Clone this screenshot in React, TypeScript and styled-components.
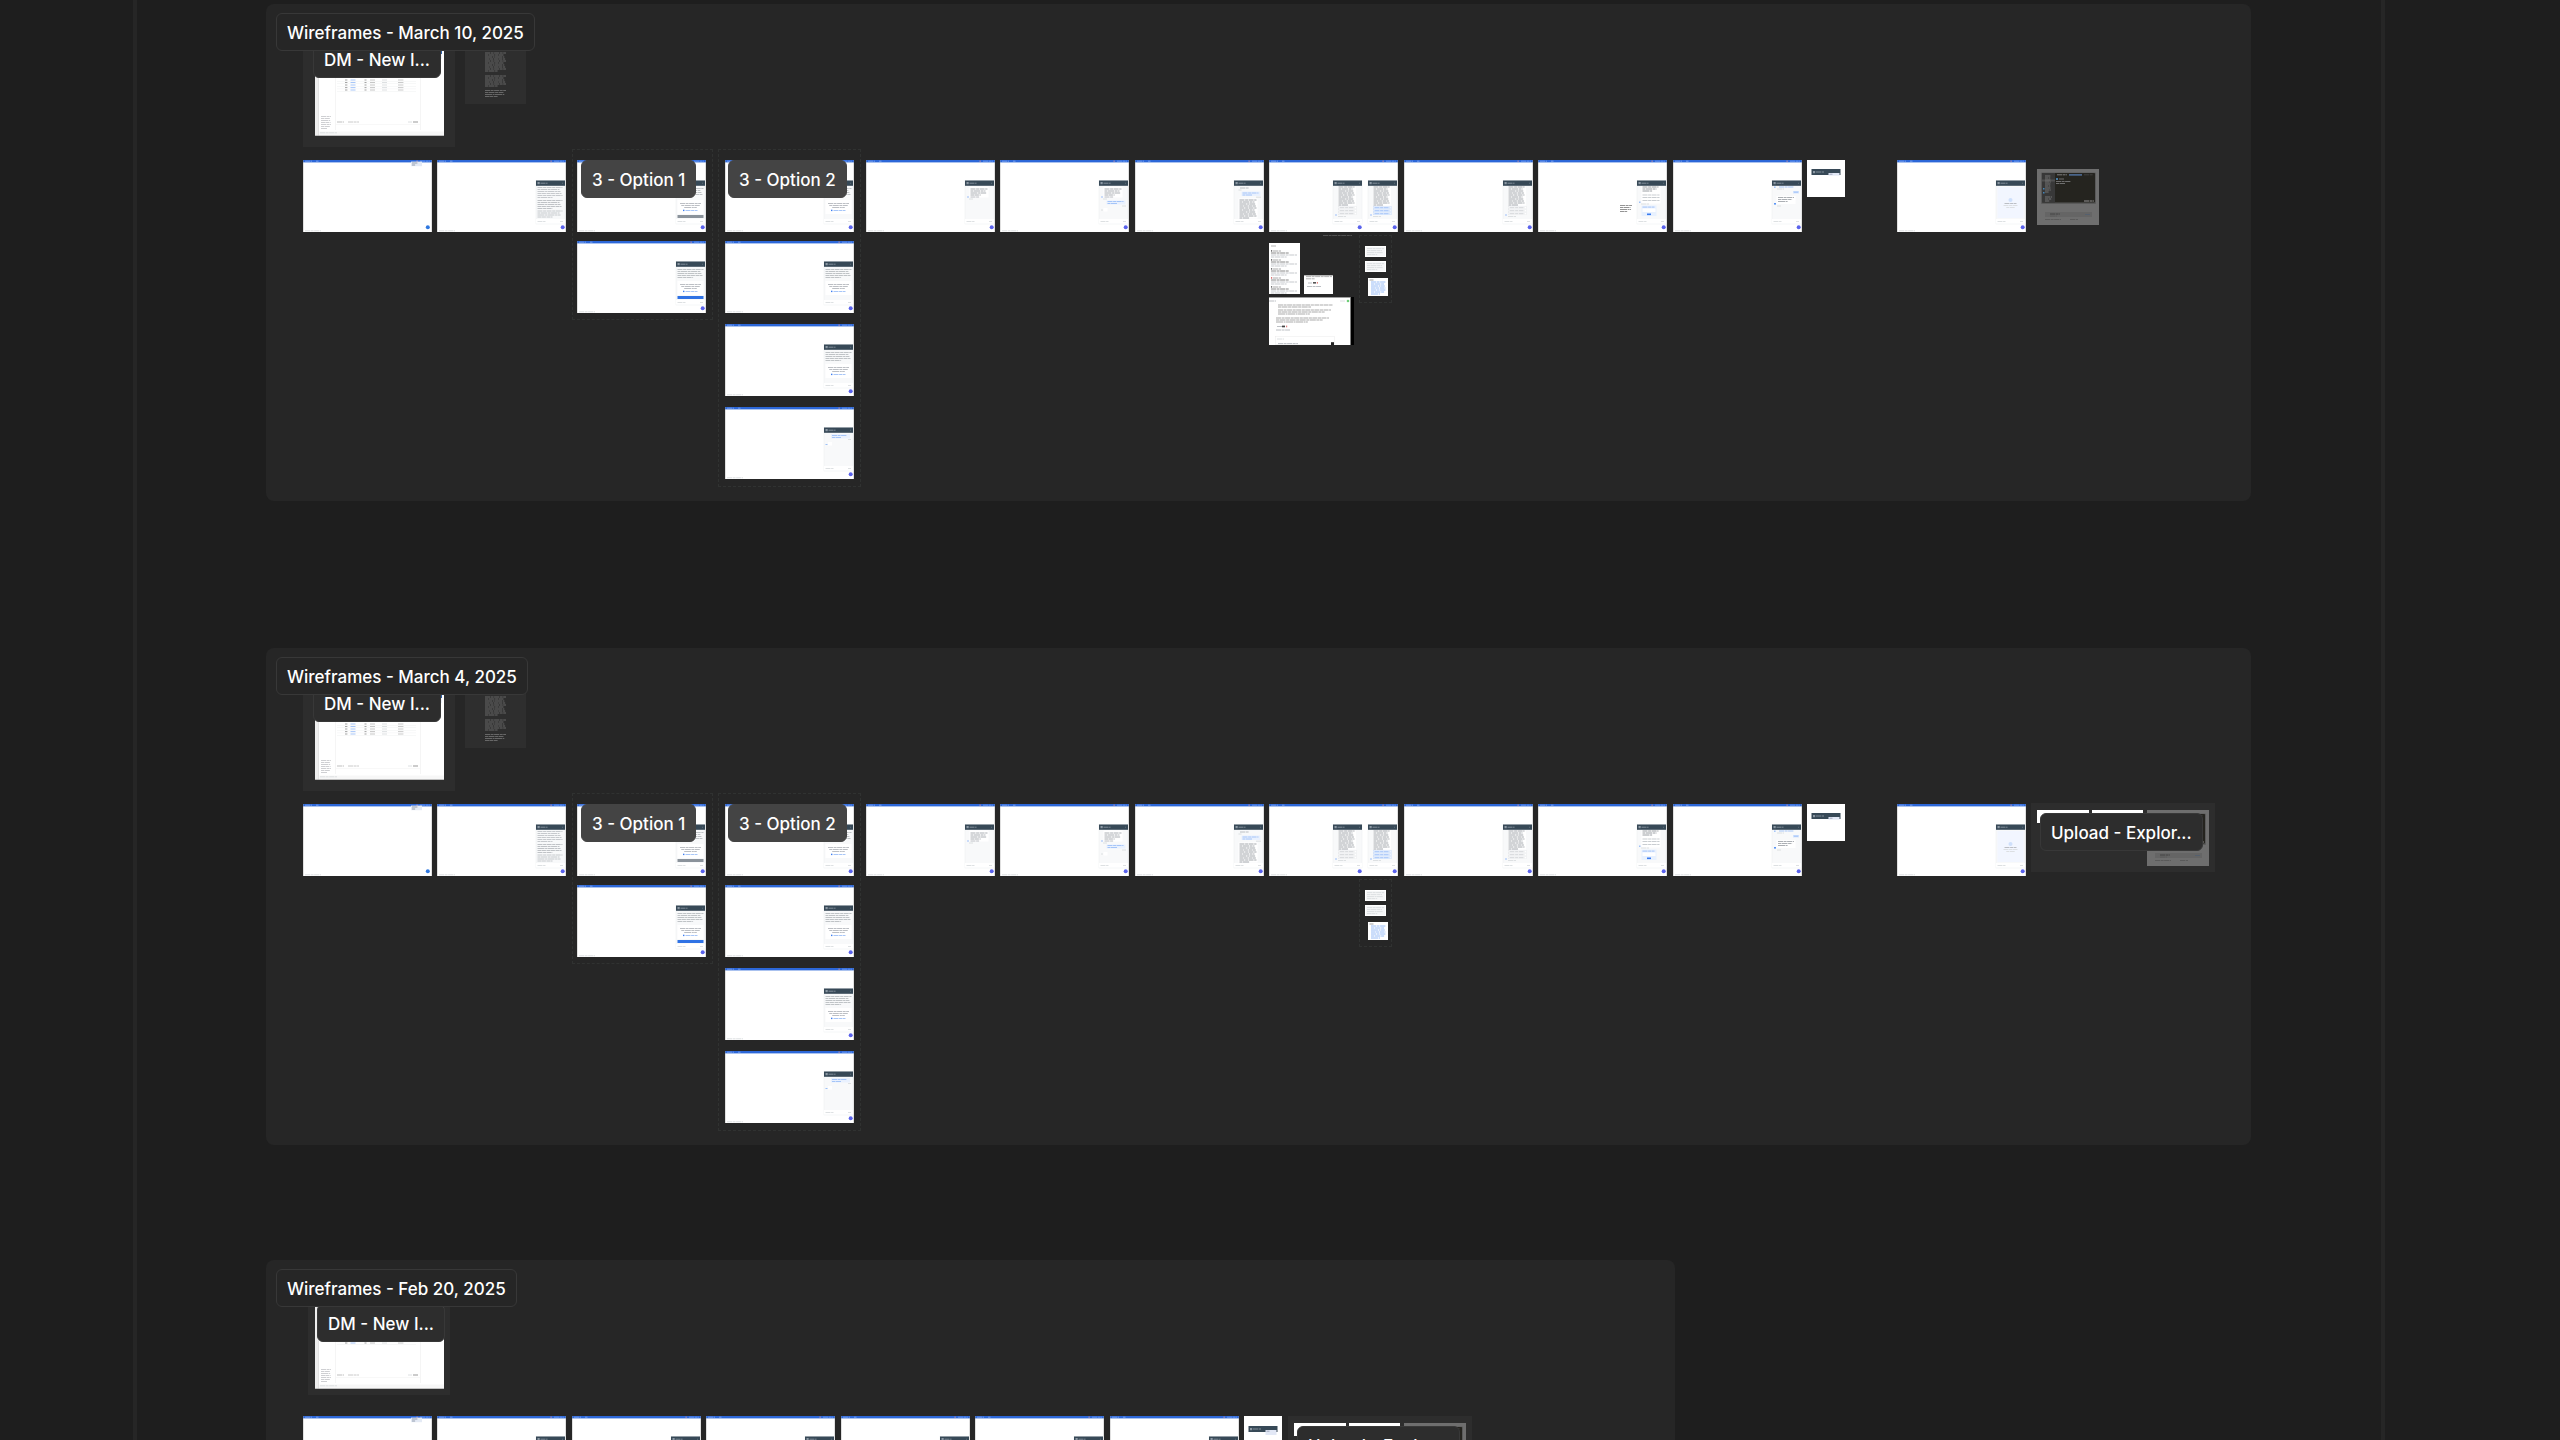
import React from "react";
import styled, { createGlobalStyle, css } from "styled-components";

const GlobalStyle = createGlobalStyle`
  *, *::before, *::after { box-sizing: border-box; }
  body {
    margin: 0;
    background: #1e1e1e;
    color: #ffffff;
    font-family: Inter, "Liberation Sans", sans-serif;
  }
`;

const Viewport = styled.main`
  height: 100vh;
  overflow: hidden;
  padding: 0 175px 0 133px;
`;

const Board = styled.div`
  display: flex;
  flex-direction: column;
  min-height: 100%;
  padding: 4px 130px 0 129px;
  border: solid #262626;
  border-width: 0 4px;
`;

const Section = styled.section<{ $width?: string; $gap?: number }>`
  position: relative;
  flex: none;
  width: ${(p) => p.$width ?? "100%"};
  height: 497px;
  margin-bottom: ${(p) => p.$gap ?? 0}px;
  border-radius: 8px;
  background: #262626;
`;

/* Anything the designer dropped on the canvas, in section coordinates. */
const onCanvas = css<{ $x: number; $y: number }>`
  position: absolute;
  left: ${(p) => p.$x}px;
  top: ${(p) => p.$y}px;
`;

const labelText = css`
  margin: 0;
  height: 38px;
  padding: 0 10px;
  border: 1px solid #383838;
  border-radius: 6px;
  font-size: 17px;
  font-weight: 500;
  line-height: 38px;
  white-space: nowrap;
`;

const SectionTitle = styled.h2<{ $x: number; $y: number }>`
  ${onCanvas}
  ${labelText}
  background: #262626;
`;

const NestedTitle = styled.h3<{ $x: number; $y: number }>`
  ${onCanvas}
  ${labelText}
  background: #2d2d2d;
`;

const GroupTitle = styled.h3<{ $x: number; $y: number }>`
  ${onCanvas}
  ${labelText}
  border-color: #444444;
  background: #444444;
`;

type BoxProps = { $x: number; $y: number; $w: number; $h: number };

const box = css<BoxProps>`
  ${onCanvas}
  width: ${(p) => p.$w}px;
  height: ${(p) => p.$h}px;
`;

const NestedSection = styled.div<BoxProps>`
  ${box}
  background: #2d2d2d;
`;

const DashedGroup = styled.div<BoxProps>`
  ${box}
  border: 1px dashed #303231;
`;

const Frame = styled.div<BoxProps & { $fill?: string }>`
  ${box}
  overflow: hidden;
  background: ${(p) => p.$fill ?? "#ffffff"};
`;

const Art = styled.svg`
  display: block;
  width: 100%;
  height: 100%;
`;

const GREY = "#b4b8bd";
const PALE = "#d9dcdf";
const BLUE = "#9dc0f7";

const dashes = ["5 .6 3 .5", "3 .5 6 .6", "7 .6 2 .4", "4 .4 4 .6"];

function Lines({
  x, y, w, n, step = 2, color = GREY, center = false,
}: { x: number; y: number; w: number; n: number; step?: number; color?: string; center?: boolean }) {
  return (
    <g stroke={color} strokeWidth="0.9">
      {Array.from({ length: n }, (_, i) => {
        const length = i === n - 1 && n > 1 ? w * 0.6 : w * (1 - ((i * 7) % 4) * 0.04);
        const start = center ? x + (w - length) / 2 : x;
        return (
          <line key={i} x1={start} x2={start + length} y1={y + i * step} y2={y + i * step}
            strokeDasharray={dashes[i % dashes.length]} />
        );
      })}
    </g>
  );
}

type Kind =
  | "long" | "agreeOff" | "agreeOn" | "agree" | "typing" | "welcome"
  | "reply" | "answer" | "choices" | "choicesOn" | "form" | "done" | "drop";

function Choices({ active = false }: { active?: boolean }) {
  const color = active ? BLUE : "#ced1d5";
  return (
    <g>
      <rect x="5" y="6" width="18" height="19" fill="#fff" />
      <Lines x={5.5} y={6.5} w={16} n={10} color="#9a9ea4" />
      {[26, 29, 32].map((y) => (
        <g key={y}>
          <rect x="5.5" y={y} width="18" height="2.4" fill={active ? "#eef4fe" : "#fff"} stroke={color} strokeWidth="0.2" />
          <Lines x={6.5} y={y + 1.2} w={15} n={1} color={color} />
        </g>
      ))}
      <rect x="2" y="34" width="2" height="1" fill={BLUE} />
      <Lines x={5} y={36} w={8} n={1} color={PALE} />
    </g>
  );
}

function Messages({ kind }: { kind: Kind }) {
  switch (kind) {
    case "long":
      return <g><Lines x={1.5} y={7} w={25} n={6} color="#c0c3c7" /><Lines x={1.5} y={20} w={25} n={5} color="#b8bbc0" /><Lines x={1.5} y={30.5} w={25} n={4} color="#c0c3c7" /></g>;
    case "agreeOff":
    case "agreeOn":
    case "agree":
      return (
        <g>
          <Lines x={1.5} y={8} w={26} n={5} color="#b8bcc0" />
          <rect x="1.5" y="19.5" width="26" height="14" fill="#fff" />
          <Lines x={4} y={23} w={21} n={3} center />
          <rect x="7" y="29.2" width="1.4" height="1.4" fill="#3b7cf0" />
          <Lines x={9.5} y={30} w={12} n={1} color={BLUE} />
          {kind !== "agree" && (
            <rect x="1.5" y="34.5" width="26" height="3" fill={kind === "agreeOn" ? "#2f72e4" : "#8b939b"} />
          )}
        </g>
      );
    case "typing":
      return <g><rect x="7" y="6.5" width="19" height="4.5" fill="#e9f1fe" /><Lines x={8} y={8} w={15} n={2} color={BLUE} /><Lines x={24} y={12} w={3} n={1} color={PALE} /><rect x="4" y="14.5" width="4" height="3.5" fill="#fff" /><rect x="1.5" y="16.5" width="2" height="1" fill={BLUE} /></g>;
    case "welcome":
    case "reply":
      return (
        <g>
          <rect x="4.5" y="6" width="19" height="11" fill="#fff" />
          <Lines x={5.5} y={8.5} w={17} n={4} color="#a2a6ab" />
          <rect x="2" y="16" width="2" height="1" fill={BLUE} />
          <Lines x={5.5} y={16.5} w={9} n={1} />
          <Lines x={4} y={18.5} w={4} n={1} color={PALE} />
          {kind === "reply" && (
            <g><rect x="7.5" y="20" width="19" height="4" fill="#e9f1fe" /><Lines x={8.5} y={21} w={16} n={2} color={BLUE} /><Lines x={23} y={25.5} w={4} n={1} color={PALE} /><rect x="4.5" y="27.5" width="4" height="3.5" fill="#fff" /><Lines x={2} y={29.5} w={2} n={1} color={PALE} /></g>
          )}
        </g>
      );
    case "answer":
      return <g><Lines x={6} y={7.5} w={9} n={1} /><Lines x={4.5} y={9.5} w={3} n={1} color={PALE} /><rect x="7.5" y="11" width="19" height="4.5" fill="#e9f1fe" /><Lines x={8.5} y={12.5} w={16} n={2} color={BLUE} /><Lines x={22} y={16.7} w={5} n={1} color={PALE} /><rect x="4.5" y="18" width="19" height="20" fill="#fff" /><Lines x={5.5} y={19.5} w={17} n={10} color="#999da3" /></g>;
    case "choices":
      return <Choices />;
    case "choicesOn":
      return <Choices active />;
    case "form":
      return (
        <g>
          <rect x="4.5" y="5" width="19" height="18" fill="#fff" />
          <Lines x={5.5} y={6.5} w={16} n={3} color="#8f9399" />
          <Lines x={5.5} y={14.5} w={17} n={1} color="#c3c7cc" />
          <Lines x={5.5} y={17} w={17} n={1} color="#c3c7cc" />
          <Lines x={5.5} y={20} w={17} n={1} color="#c3c7cc" />
          <rect x="2" y="21" width="1.5" height="1.5" fill={BLUE} />
          <Lines x={4} y={23.5} w={8} n={1} color={PALE} />
          <rect x="4.5" y="25" width="15" height="10.5" fill="#e8f1fe" />
          <rect x="5.5" y="28" width="13" height="3.5" fill="#fff" />
          <Lines x={5.5} y={26.6} w={12} n={1} color={BLUE} />
          <rect x="10" y="33" width="4" height="1.6" fill="#3b7cf0" />
        </g>
      );
    case "done":
      return <g><rect x="2" y="6" width="1.6" height="1.4" fill={BLUE} /><Lines x={7} y={6.5} w={15} n={1} color={BLUE} /><Lines x={5} y={8.5} w={7} n={1} color={PALE} /><rect x="21" y="10.5" width="6" height="2.4" fill="#cfe1fd" /><Lines x={22} y={11.7} w={4} n={1} color={BLUE} /><rect x="4.5" y="15.5" width="19" height="8" fill="#fff" /><Lines x={6} y={17} w={16} n={3} color="#a2a6ab" /><rect x="2" y="22.5" width="2" height="1.6" fill="#5b96f5" /><Lines x={5} y={25.5} w={4} n={1} color={PALE} /></g>;
    case "drop":
      return <g><rect x="1.5" y="6.5" width="26" height="31" fill="#f2f6ff" /><circle cx="14.5" cy="19.5" r="2" fill="#cfe0fb" /><Lines x={8.5} y={23} w={12} n={1} /><Lines x={7.5} y={25} w={14} n={2} color={PALE} center /></g>;
  }
}

function Panel({ x, kind }: { x: number; kind: Kind }) {
  return (
    <g transform={`translate(${x} 20.5)`}>
      <rect x="0" y="0" width="29" height="43.5" fill="#f8f9fa" stroke="#eceef0" strokeWidth="0.5" />
      <rect x="0" y="38.5" width="29" height="4.5" fill="#fff" />
      <Messages kind={kind} />
      <Lines x={1.5} y={41} w={8} n={1} color={PALE} />
      <Lines x={24} y={41} w={3} n={1} color={PALE} />
      <rect x="0" y="0" width="29" height="5.3" fill="#374957" />
      <rect x="1.5" y="1.5" width="2.2" height="2.2" fill="#8b98a3" />
      <Lines x={4.5} y={2.7} w={7} n={1} color="#8a96a1" />
      <rect x="26" y="2.3" width="1" height="0.8" fill="#667684" />
      <circle cx="26.7" cy="46.7" r="2" fill="#5a62ec" />
    </g>
  );
}

function Screen({ x, y, panels, note }: { x: number; y: number; panels: [number, Kind][]; note?: boolean }) {
  return (
    <Frame $x={x} $y={y} $w={129} $h={72}>
      <Art viewBox="0 0 129 72" aria-hidden="true">
        <rect width="129" height="2.4" fill="#2c67d8" />
        <Lines x={2} y={1.2} w={7} n={1} color="#7ea4ee" />
        <Lines x={13} y={1.2} w={2.5} n={1} color="#7ea4ee" />
        <rect x="113.5" y="0.6" width="1.2" height="1.2" fill="#c78fa0" />
        <Lines x={117} y={1.2} w={10} n={1} color="#6f9bf0" />
        <rect x="0" y="0" width="0.6" height="72" fill="#9a9a9a" opacity="0.5" />
        <rect x="128.4" y="0" width="0.6" height="72" fill="#9a9a9a" opacity="0.5" />
        <Lines x={2} y={70.8} w={16} n={1} color={PALE} />
        {panels.length === 0 && (
          <g>
            <rect x="108" y="1.6" width="11" height="4.6" fill="#e4eaf5" />
            <Lines x={109} y={3} w={6} n={2} color="#8f98a8" />
            <circle cx="124.8" cy="67.2" r="2" fill="#2f78e0" />
          </g>
        )}
        {panels.map(([px, kind]) => <Panel key={px} x={px} kind={kind} />)}
        {note && <Lines x={82} y={45.5} w={12} n={4} color="#888888" />}
      </Art>
    </Frame>
  );
}

function HeaderSnippet({ x, low }: { x: number; low?: boolean }) {
  const top = low ? 10 : 9;
  return (
    <Frame $x={x} $y={156} $w={38} $h={37}>
      <Art viewBox="0 0 38 37" aria-hidden="true">
        <rect x="4.5" y={top} width="29" height="6" fill="#374957" />
        <rect x="6" y={top + 2} width="2.2" height="2.2" fill="#8b98a3" />
        <Lines x={9} y={top + 3} w={8} n={1} color="#8a96a1" />
        <rect x="21.5" y={top + 4} width="11" height={low ? 5 : 2.6} fill="#e2e8f6" />
        <Lines x={22.5} y={top + 5.2} w={3} n={1} color="#9aa3b5" />
      </Art>
    </Frame>
  );
}

function Dashboard({ x, y, h }: { x: number; y: number; h: number }) {
  const base = h - 88;
  return (
    <Frame $x={x} $y={y} $w={129} $h={h}>
      <Art viewBox={`0 0 129 ${h}`} aria-hidden="true">
        <rect x="0" width="3" height={h} fill="#eeeeee" />
        <rect x="3" width="0.6" height={h} fill="#cfcfcf" />
        <g transform={`translate(0 ${base})`}>
          <rect x="122" y="0" width="5" height="6" fill="#2d5fa8" />
          <rect x="122" y="6" width="5" height="5" fill="#eef2fb" />
          {[32, 34.5, 37, 39.6, 42].map((ly) => (
            <g key={ly}>
              <rect x="22" y={ly + 1.2} width="79" height="0.3" fill="#e4e6e8" />
              <Lines x={30} y={ly} w={2.4} n={1} color="#999999" />
              <Lines x={35.5} y={ly} w={5} n={1} color={BLUE} />
              <Lines x={49.5} y={ly} w={2} n={1} color="#999999" />
              <Lines x={55} y={ly} w={5} n={1} color="#c0c0c0" />
              <Lines x={67} y={ly} w={5.5} n={1} color={PALE} />
              <Lines x={83} y={ly} w={6} n={1} color="#c4c4c4" />
            </g>
          ))}
          <rect x="20.5" y="20" width="0.4" height="62" fill="#e6e6e6" />
          <rect x="105" y="20" width="0.4" height="62" fill="#e6e6e6" />
          <rect x="21" y="76.5" width="84" height="0.3" fill="#e6e6e6" />
          <Lines x={6} y={68.5} w={10} n={7} color="#c8cacd" />
          <Lines x={22} y={74} w={7} n={1} color="#b8b8b8" />
          <Lines x={33} y={74} w={11} n={1} color="#c4c4c4" />
          <Lines x={93} y={74} w={4} n={1} color={PALE} />
          <rect x="98" y="73" width="5" height="2" fill="#cccccc" />
          <rect x="4" y="83.5" width="125" height="4" fill="#f7f7f7" />
          <Lines x={5} y={84.8} w={17} n={1} color={PALE} />
        </g>
        <rect x="0" y={h - 0.6} width="129" height="0.6" fill="#9a9a9a" />
      </Art>
    </Frame>
  );
}

function NotesDoc() {
  return (
    <Frame $x={199} $y={27} $w={61} $h={73} $fill="#2e2e2e">
      <Art viewBox="0 0 61 73" aria-hidden="true">
        <Lines x={20} y={22} w={21} n={10} color="#6e6e6e" />
        <Lines x={20} y={45} w={21} n={6} color="#6e6e6e" />
        <Lines x={20} y={59.5} w={21} n={4} color="#6e6e6e" />
      </Art>
    </Frame>
  );
}

function FileDialog({ x, y }: { x: number; y: number }) {
  return (
    <Frame $x={x} $y={y} $w={62} $h={56} $fill="#6e6e6e">
      <Art viewBox="0 0 62 56" aria-hidden="true">
        <rect x="4" y="3.5" width="55" height="31.5" rx="1" fill="#5a5a5a" />
        <rect x="5" y="4" width="53" height="29.5" rx="0.8" fill="#25241f" />
        <rect x="5" y="4" width="13" height="29.5" fill="#383838" />
        <rect x="5" y="10.5" width="13" height="2" fill="#505050" />
        <Lines x={8} y={7} w={6} n={9} color="#7a7a7a" />
        <Lines x={8} y={28} w={7} n={3} color="#7a7a7a" />
        <rect x="6" y="19" width="1.5" height="1.5" fill="#4384b8" />
        <rect x="6" y="23" width="1.5" height="1.5" fill="#4384b8" />
        <Lines x={20} y={5.8} w={10} n={1} color="#888888" />
        <rect x="32" y="5.2" width="13" height="1.4" fill="#5374a3" />
        <Lines x={47} y={5.8} w={9} n={1} color="#444444" />
        <rect x="19" y="9" width="2" height="2" fill="#477aa0" />
        <Lines x={22} y={10} w={5} n={1} color="#777777" />
        <Lines x={19} y={12.5} w={15} n={2} color="#777777" />
        <Lines x={47} y={32} w={10} n={1} color="#a0a0a0" />
        <rect x="8" y="43" width="47" height="5" fill="#656565" />
        <Lines x={13} y={45} w={10} n={1} color="#404040" />
        <Lines x={13} y={47} w={7} n={1} color="#5a5a5a" />
        <Lines x={48} y={45.5} w={5} n={1} color="#53606f" />
        <Lines x={8} y={50.5} w={16} n={1} color="#585858" />
        <Lines x={33} y={50.5} w={8} n={1} color="#585858" />
      </Art>
    </Frame>
  );
}

function ChoiceCards() {
  return (
    <>
      <DashedGroup $x={1093} $y={231} $w={33} $h={68} />
      {[242, 257].map((y) => (
        <Frame key={y} $x={1099} $y={y} $w={21} $h={11}>
          <Art viewBox="0 0 21 11" aria-hidden="true">
            <rect x="1" y="1" width="19" height="9" fill="#f6f7f8" />
            <Lines x={2} y={2.6} w={17} n={4} color={PALE} />
          </Art>
        </Frame>
      ))}
      <Frame $x={1102} $y={274} $w={20} $h={18}>
        <Art viewBox="0 0 20 18" aria-hidden="true">
          <Lines x={1.5} y={2} w={4} n={1} color="#999999" />
          <Lines x={3} y={4} w={15} n={7} color="#8db4f5" />
        </Art>
      </Frame>
    </>
  );
}

function References() {
  return (
    <>
      <Frame $x={1057} $y={230} $w={29} $h={3} $fill="transparent">
        <Art viewBox="0 0 29 3" aria-hidden="true"><Lines x={0} y={1.5} w={29} n={1} color="#555555" /></Art>
      </Frame>
      <Frame $x={1003} $y={239} $w={31} $h={51}>
        <Art viewBox="0 0 31 51" aria-hidden="true">
          <Lines x={2} y={3} w={5} n={1} color="#aaaaaa" />
          {[8, 17, 26, 35, 44].map((y, i) => (
            <g key={y}>
              <rect x="2" y={y - 0.8} width="1.2" height="1.4" fill={i === 3 ? "#d05050" : "#555555"} />
              <Lines x={4} y={y} w={8} n={1} color="#a0a0a0" />
              <Lines x={2} y={y + 2} w={18} n={1} color="#7c7c7c" />
              <Lines x={2} y={y + 4} w={26} n={2} color="#c0c3c7" />
            </g>
          ))}
        </Art>
      </Frame>
      <Frame $x={1038} $y={271} $w={29} $h={19}>
        <Art viewBox="0 0 29 19" aria-hidden="true">
          <rect width="29" height="0.6" fill="#888888" />
          <Lines x={2} y={1.6} w={26} n={1} color="#aaaaaa" />
          <Lines x={2} y={3.8} w={9} n={1} color="#aaaaaa" />
          <Lines x={4} y={8} w={4} n={1} />
          <rect x="9" y="7" width="3" height="1.6" fill="#555555" />
          <rect x="12.8" y="7" width="1.2" height="1.6" fill="#e08080" />
          <Lines x={3} y={11.5} w={14} n={1} />
        </Art>
      </Frame>
      <Frame $x={1003} $y={293} $w={85} $h={48} $fill="#000000">
        <Art viewBox="0 0 85 48" aria-hidden="true">
          <rect width="81.5" height="48" fill="#fff" />
          <rect width="81.5" height="0.7" fill="#777" />
          <Lines x={0} y={4} w={7} n={1} />
          <Lines x={71} y={4} w={5} n={1} color={PALE} />
          <circle cx="79" cy="4" r="1.3" fill="#6fce78" />
          <Lines x={9} y={8} w={55} n={2} color="#a2a2a2" />
          <Lines x={9} y={13} w={53} n={3} color="#a2a2a2" />
          <Lines x={7} y={21} w={53} n={3} color="#a2a2a2" />
          <Lines x={8} y={29.5} w={5} n={1} />
          <rect x="13" y="28.6" width="3" height="1.7" fill="#444" />
          <rect x="17" y="28.6" width="1.2" height="1.7" fill="#e08080" />
          <Lines x={7} y={33} w={14} n={1} />
          <rect x="6.5" y="39.5" width="59" height="8.2" fill="#fff" stroke="#e5e5e5" strokeWidth="0.4" />
          <Lines x={8} y={42} w={7} n={1} color={PALE} />
          <Lines x={9} y={46.6} w={20} n={1} />
          <rect x="62" y="45.2" width="3" height="2.8" fill="#222" />
        </Art>
      </Frame>
    </>
  );
}

function UploadSection({ x, y }: { x: number; y: number }) {
  return (
    <>
      <NestedSection $x={x} $y={y} $w={184} $h={69} />
      <Frame $x={x + 6} $y={y + 7} $w={52} $h={13} />
      <Frame $x={x + 61} $y={y + 7} $w={51} $h={13} />
      <FileDialog x={x + 116} y={y + 7} />
      <NestedTitle $x={x + 9} $y={y + 10}>Upload - Explor...</NestedTitle>
    </>
  );
}

const flow: { x: number; panels: [number, Kind][] }[] = [
  { x: 37, panels: [] },
  { x: 171, panels: [[99, "long"]] },
  { x: 600, panels: [[99, "welcome"]] },
  { x: 734, panels: [[99, "reply"]] },
  { x: 869, panels: [[99, "answer"]] },
  { x: 1003, panels: [[64, "choices"], [99, "choicesOn"]] },
  { x: 1138, panels: [[99, "choices"]] },
  { x: 1272, panels: [[99, "form"]] },
  { x: 1407, panels: [[99, "done"]] },
  { x: 1631, panels: [[99, "drop"]] },
];

function MarchFlow({ title, annotated, children }: { title: string; annotated?: boolean; children: React.ReactNode }) {
  return (
    <Section $gap={annotated ? 147 : 115}>
      <NestedSection $x={37} $y={27} $w={152} $h={116} />
      <Dashboard x={49} y={44} h={88} />
      <NotesDoc />
      <DashedGroup $x={306} $y={145} $w={141} $h={171} />
      <DashedGroup $x={452} $y={145} $w={143} $h={338} />
      {flow.map((screen) => (
        <Screen key={screen.x} x={screen.x} y={156} panels={screen.panels} note={annotated && screen.x === 1272} />
      ))}
      <Screen x={311} y={156} panels={[[99, "agreeOff"]]} />
      <Screen x={311} y={237} panels={[[99, "agreeOn"]]} />
      <Screen x={459} y={156} panels={[[99, "agree"]]} />
      <Screen x={459} y={237} panels={[[99, "agree"]]} />
      <Screen x={459} y={320} panels={[[99, "agree"]]} />
      <Screen x={459} y={403} panels={[[99, "typing"]]} />
      <HeaderSnippet x={1541} />
      <ChoiceCards />
      {children}
      <GroupTitle $x={315} $y={156}>3 - Option 1</GroupTitle>
      <GroupTitle $x={462} $y={156}>3 - Option 2</GroupTitle>
      <NestedTitle $x={47} $y={36}>DM - New I...</NestedTitle>
      <SectionTitle $x={10} $y={9}>{title}</SectionTitle>
    </Section>
  );
}

const februaryFlow: { x: number; panels: [number, Kind][] }[] = [
  { x: 37, panels: [] },
  { x: 171, panels: [[99, "long"]] },
  { x: 306, panels: [[99, "agree"]] },
  { x: 440, panels: [[99, "welcome"]] },
  { x: 575, panels: [[99, "reply"]] },
  { x: 709, panels: [[99, "answer"]] },
  { x: 844, panels: [[99, "choices"]] },
];

export default function App() {
  return (
    <Viewport>
      <GlobalStyle />
      <Board>
        <MarchFlow title="Wireframes - March 10, 2025" annotated>
          <References />
          <FileDialog x={1771} y={165} />
        </MarchFlow>
        <MarchFlow title="Wireframes - March 4, 2025">
          <UploadSection x={1765} y={155} />
        </MarchFlow>
        <Section $width="71%">
          <NestedSection $x={42} $y={27} $w={142} $h={108} />
          <Dashboard x={49} y={40} h={89} />
          {februaryFlow.map((screen) => (
            <Screen key={screen.x} x={screen.x} y={156} panels={screen.panels} />
          ))}
          <HeaderSnippet x={978} low />
          <UploadSection x={1022} y={156} />
          <NestedTitle $x={51} $y={44}>DM - New I...</NestedTitle>
          <SectionTitle $x={10} $y={9}>Wireframes - Feb 20, 2025</SectionTitle>
        </Section>
      </Board>
    </Viewport>
  );
}
